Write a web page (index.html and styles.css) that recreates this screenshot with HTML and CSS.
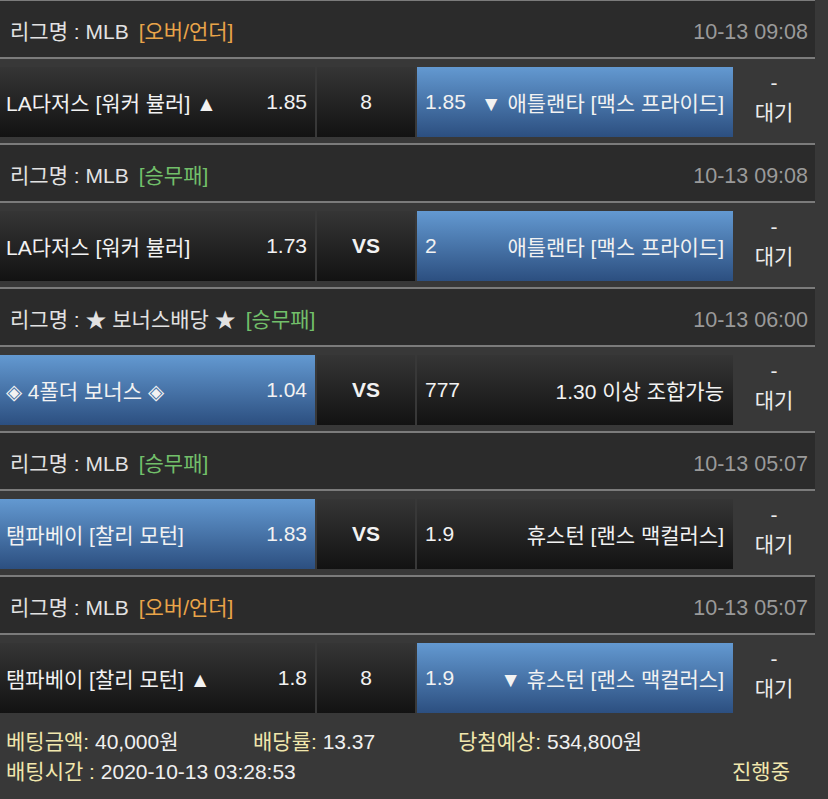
FILE: index.html
```html
<!DOCTYPE html>
<html>
<head>
  <meta charset="utf-8">
  <title>배팅내역</title>
  <link rel="stylesheet" href="styles.css">
</head>
<body>
  <div class="board">

    <div class="game">
      <div class="game-head">
        <span class="league">리그명 : MLB</span>
        <span class="type ou">[오버/언더]</span>
        <span class="date">10-13 09:08</span>
      </div>
      <div class="game-row">
        <div class="pick"><span>LA다저스 [워커 뷸러] ▲</span><span>1.85</span></div>
        <div class="pick mid">8</div>
        <div class="pick on"><span>1.85</span><span>▼ 애틀랜타 [맥스 프라이드]</span></div>
        <div class="state">-<br>대기</div>
      </div>
    </div>

    <div class="game">
      <div class="game-head">
        <span class="league">리그명 : MLB</span>
        <span class="type wdl">[승무패]</span>
        <span class="date">10-13 09:08</span>
      </div>
      <div class="game-row">
        <div class="pick"><span>LA다저스 [워커 뷸러]</span><span>1.73</span></div>
        <div class="pick mid vs">VS</div>
        <div class="pick on"><span>2</span><span>애틀랜타 [맥스 프라이드]</span></div>
        <div class="state">-<br>대기</div>
      </div>
    </div>

    <div class="game">
      <div class="game-head">
        <span class="league">리그명 : ★ 보너스배당 ★</span>
        <span class="type wdl">[승무패]</span>
        <span class="date">10-13 06:00</span>
      </div>
      <div class="game-row">
        <div class="pick on"><span>◈ 4폴더 보너스 ◈</span><span>1.04</span></div>
        <div class="pick mid vs">VS</div>
        <div class="pick"><span>777</span><span>1.30 이상 조합가능</span></div>
        <div class="state">-<br>대기</div>
      </div>
    </div>

    <div class="game">
      <div class="game-head">
        <span class="league">리그명 : MLB</span>
        <span class="type wdl">[승무패]</span>
        <span class="date">10-13 05:07</span>
      </div>
      <div class="game-row">
        <div class="pick on"><span>탬파베이 [찰리 모턴]</span><span>1.83</span></div>
        <div class="pick mid vs">VS</div>
        <div class="pick"><span>1.9</span><span>휴스턴 [랜스 맥컬러스]</span></div>
        <div class="state">-<br>대기</div>
      </div>
    </div>

    <div class="game">
      <div class="game-head">
        <span class="league">리그명 : MLB</span>
        <span class="type ou">[오버/언더]</span>
        <span class="date">10-13 05:07</span>
      </div>
      <div class="game-row">
        <div class="pick"><span>탬파베이 [찰리 모턴] ▲</span><span>1.8</span></div>
        <div class="pick mid">8</div>
        <div class="pick on"><span>1.9</span><span>▼ 휴스턴 [랜스 맥컬러스]</span></div>
        <div class="state">-<br>대기</div>
      </div>
    </div>

    <div class="summary">
      <div class="summary-line">
        <span class="cell-amount"><span class="label">베팅금액:</span> 40,000원</span>
        <span class="cell-rate"><span class="label">배당률:</span> 13.37</span>
        <span><span class="label">당첨예상:</span> 534,800원</span>
      </div>
      <div class="summary-line">
        <span><span class="label">배팅시간 :</span> 2020-10-13 03:28:53</span>
        <span class="label status">진행중</span>
      </div>
    </div>

  </div>
</body>
</html>
```

FILE: styles.css
```css
body {
  margin: 0;
  background-color: #383838;
  font-family: "Liberation Sans", "Noto Sans CJK KR", sans-serif;
  font-size: 21px;
  color: #f0f0f0;
}
.board {
  width: 815px;
  margin-top: -1px;
}
.game {
  border-top: 2px solid #7b7b7b;
}
.game-head {
  display: flex;
  height: 50px;
  padding: 6px 7px 0 10px;
  line-height: 50px;
  background-color: #2b2b2b;
  border-bottom: 2px solid #7b7b7b;
  color: #e2e2e2;
}
.type {
  margin-left: 10px;
}
.type.ou {
  color: #e9a449;
}
.type.wdl {
  color: #72bf6a;
}
.date {
  margin-left: auto;
  font-size: 21.5px;
  color: #9a9a9a;
}
.game-row {
  display: flex;
  padding: 8px 0 6px;
}
.pick {
  display: flex;
  justify-content: space-between;
  align-items: center;
  width: 315px;
  height: 70px;
  padding: 0 8px 0 6px;
  box-sizing: border-box;
  background: linear-gradient(#353535, #121212);
  color: #f2f2f2;
}
.pick + .pick {
  margin-left: 2px;
}
.pick:nth-child(3) {
  width: 316px;
  padding: 0 9px 0 8px;
}
.pick.on {
  background: linear-gradient(#6399d1, #2c4f80);
}
.pick.mid {
  width: 98px;
  justify-content: center;
  padding: 0;
}
.pick.vs {
  font-weight: bold;
}
.state {
  flex: 1;
  padding-top: 1px;
  line-height: 30px;
  text-align: center;
  color: #ececec;
}
.summary {
  padding: 8px 0 0 6px;
  line-height: 30px;
}
.summary-line {
  display: flex;
}
.cell-amount {
  width: 247px;
}
.cell-rate {
  width: 205px;
}
.label {
  color: #f1e7ad;
}
.status {
  margin-left: auto;
  margin-right: 25px;
}
```
